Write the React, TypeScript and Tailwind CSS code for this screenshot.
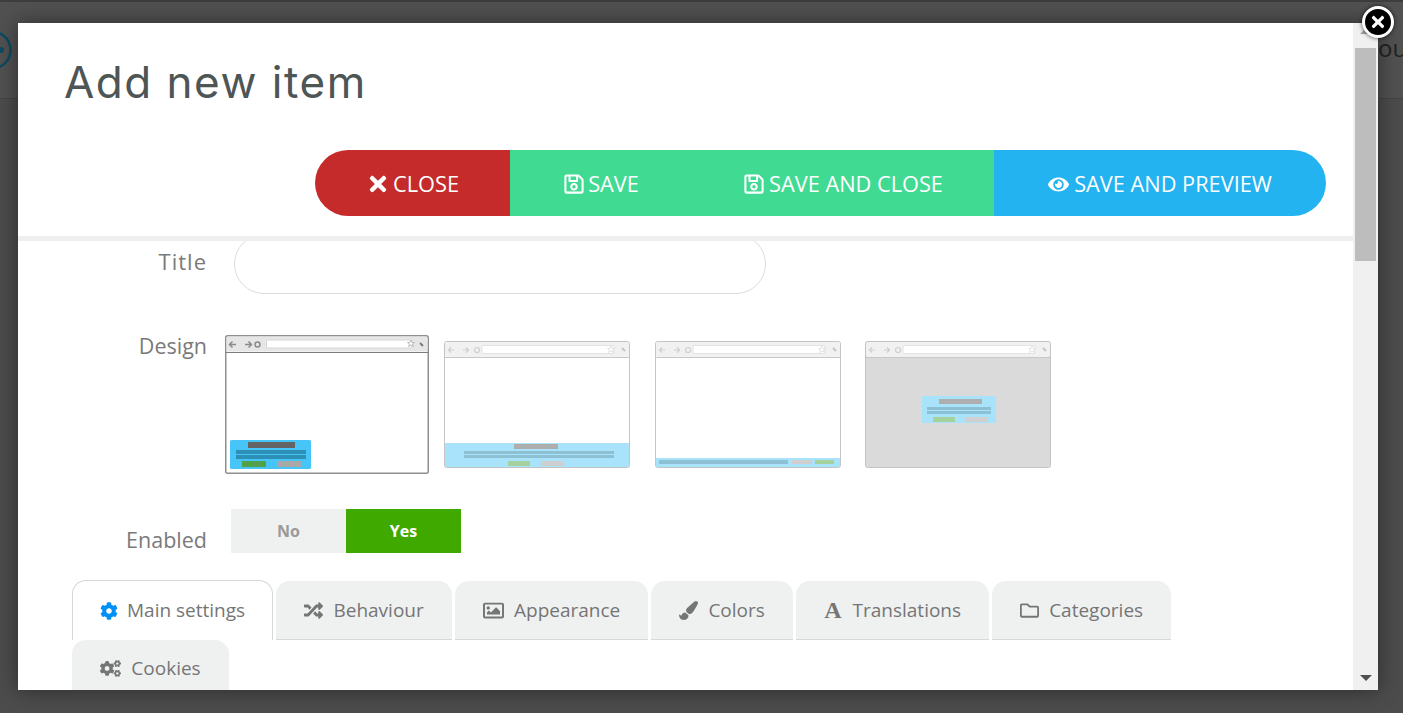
import { FaTimes, FaRegSave, FaEye, FaCog, FaRandom, FaRegImage, FaPaintBrush, FaRegFolder, FaCogs } from 'react-icons/fa'
import type { ReactNode } from 'react'

function BrowserThumb({ variant }: { variant: 'bar' | 'strip' | 'modal' }) {
  return (
    <svg width="186" height="127" viewBox="0 0 186 127" className="block">
      <rect x="0.5" y="0.5" width="185" height="126" rx="2" fill={variant === 'modal' ? '#dadada' : '#fff'} stroke="#c4c4c4" />
      <rect x="1" y="1" width="184" height="15" rx="2" fill="#f1f1f1" />
      <line x1="1" y1="16.5" x2="185" y2="16.5" stroke="#c8c8c8" />
      <path d="M10 9h-5m2-2.500-2.500 2.500 2.500 2.500M19 9h5m-2-2.500 2.500 2.500-2.500 2.500" fill="none" stroke="#cfcfcf" strokeWidth="1.200" />
      <circle cx="33" cy="9" r="2.500" fill="none" stroke="#cfcfcf" strokeWidth="1.200" />
      <rect x="38" y="4.500" width="132" height="8" rx="1" fill="#fff" stroke="#e2e2e2" />
      <path d="M167 5l1 2.500h2.500l-2 1.500 1 2.500-2.500-1.500-2.500 1.500 1-2.500-2-1.500h2.500z" fill="#fff" stroke="#d8d8d8" strokeWidth=".7" />
      <path d="M178 7l3 3" stroke="#c4c4c4" strokeWidth="1.800" />
      {variant === 'bar' && (
        <g>
          <rect x="1" y="102" width="184" height="24" fill="#a8e3fb" />
          <rect x="70" y="103" width="44" height="5" fill="#aeaeae" />
          <rect x="20" y="110" width="150" height="3" fill="#8ec0d4" />
          <rect x="20" y="114" width="150" height="3" fill="#8ec0d4" />
          <rect x="64" y="120" width="22" height="5" fill="#a5d29c" />
          <rect x="97" y="120" width="23" height="5" fill="#cfcfcf" />
        </g>
      )}
      {variant === 'strip' && (
        <g>
          <rect x="1" y="117" width="184" height="9" fill="#a8e3fb" />
          <rect x="4" y="119" width="129" height="4" fill="#8ec0d4" />
          <rect x="137" y="119" width="20" height="4" fill="#cfcfcf" />
          <rect x="160" y="119" width="19" height="4" fill="#a5d29c" />
        </g>
      )}
      {variant === 'modal' && (
        <g>
          <rect x="57" y="55" width="74" height="27" fill="#a8e3fb" />
          <rect x="74" y="58" width="43" height="5" fill="#aeaeae" />
          <rect x="62" y="66" width="64" height="3" fill="#8ec0d4" />
          <rect x="62" y="70" width="64" height="3" fill="#8ec0d4" />
          <rect x="68" y="76" width="22" height="5" fill="#a5d29c" />
          <rect x="100" y="76" width="23" height="5" fill="#cfcfcf" />
        </g>
      )}
    </svg>
  )
}

function SelectedThumb() {
  return (
    <svg width="204" height="139" viewBox="0 0 204 139" className="block">
      <rect x="0.750" y="0.750" width="202.500" height="137.500" rx="2" fill="#fff" stroke="#8f8f8f" strokeWidth="1.500" />
      <rect x="1.500" y="1.500" width="201" height="15" rx="2" fill="#e6e6e6" />
      <line x1="1" y1="17.500" x2="203" y2="17.500" stroke="#7c7c7c" />
      <path d="M11 9.500H5m2.500-3-3 3 3 3M20 9.500h6m-2.500-3 3 3-3 3" fill="none" stroke="#8a8a8a" strokeWidth="1.500" />
      <circle cx="32.500" cy="9.500" r="2.500" fill="none" stroke="#8a8a8a" strokeWidth="1.500" />
      <rect x="41.500" y="5" width="145" height="8" rx="1" fill="#fff" stroke="#d6d6d6" />
      <path d="M186 5l1 2.500h2.500l-2 1.500 1 2.500-2.500-1.500-2.500 1.500 1-2.500-2-1.500h2.500z" fill="#fff" stroke="#a6a6a6" strokeWidth=".7" />
      <path d="M195 8l3 3" stroke="#777" strokeWidth="1.800" />
      <rect x="5" y="105" width="81" height="29" rx="1.500" fill="#47c4f8" />
      <rect x="23" y="107" width="47" height="6" fill="#646464" />
      <rect x="11" y="115" width="70" height="4" fill="#2b8fb6" />
      <rect x="11" y="120" width="70" height="4" fill="#2b8fb6" />
      <rect x="17" y="126" width="24" height="6" fill="#50a24a" />
      <rect x="52" y="126" width="25" height="6" fill="#a8a8a8" />
    </svg>
  )
}

const tabs: { label: string; icon: ReactNode; className: string }[] = [
  {
    label: 'Main settings',
    icon: <FaCog className="text-[18px] text-[#0090f5]" />,
    className: 'h-[60px] gap-[9px] border border-b-0 border-[#d8d8d8] bg-white px-[27px]',
  },
  {
    label: 'Behaviour',
    icon: <FaRandom className="text-[19px]" />,
    className: 'mt-px h-[59px] w-[176px] justify-center gap-[10px] border-b border-[#d8d8d8] bg-[#eff1f1]',
  },
  {
    label: 'Appearance',
    icon: <FaRegImage className="text-[21px]" />,
    className: 'mt-px h-[59px] w-[193px] justify-center gap-[10px] border-b border-[#d8d8d8] bg-[#eff1f1]',
  },
  {
    label: 'Colors',
    icon: <FaPaintBrush className="text-[19px]" />,
    className: 'mt-px h-[59px] w-[142px] justify-center gap-[10px] border-b border-[#d8d8d8] bg-[#eff1f1]',
  },
  {
    label: 'Translations',
    icon: <span className="font-['Liberation_Serif',serif] text-[24px] leading-none font-bold">A</span>,
    className: 'mt-px h-[59px] w-[193px] justify-center gap-[11px] border-b border-[#d8d8d8] bg-[#eff1f1]',
  },
  {
    label: 'Categories',
    icon: <FaRegFolder className="text-[19px]" />,
    className: 'mt-px h-[59px] w-[179px] justify-center gap-[10px] border-b border-[#d8d8d8] bg-[#eff1f1]',
  },
  {
    label: 'Cookies',
    icon: <FaCogs className="text-[21px]" />,
    className: 'h-[56px] w-[157px] justify-center gap-[10px] bg-[#eff1f1]',
  },
]

export default function App() {
  return (
    <div className="relative h-[713px] w-full overflow-hidden bg-[#4c4c4c] font-['Open_Sans',sans-serif]">
      {/* page behind the dialog */}
      <div className="flex h-[99px] items-center justify-between overflow-hidden border-t-2 border-b border-[#3d3d3d] border-b-[#444] bg-[#515151]">
        <svg width="40" height="44" viewBox="0 0 40 44" className="-ml-[28px]">
          <circle cx="20" cy="22" r="18.500" fill="none" stroke="#0c4a63" strokeWidth="2.500" />
          <circle cx="29" cy="22" r="3" fill="#0c4a63" />
        </svg>
        <span className="mb-[4px] w-[25px] overflow-hidden text-[24px] font-normal text-[#222]">ou</span>
      </div>

      {/* dialog */}
      <div className="absolute top-[23px] right-[25px] bottom-[23px] left-[18px] flex bg-white shadow-[0_0_20px_rgba(0,0,0,0.45)]">
        <div className="flex min-w-0 flex-1 flex-col">
          <div className="h-[218px] shrink-0 border-b-[5px] border-[#eeeeee]">
            <h1 className="pt-[30px] pl-[46px] font-['Inter',sans-serif] text-[44px] leading-[58px] tracking-[1.5px] text-[#4e5555]">Add new item</h1>
            <div className="mt-[39px] ml-[297px] flex h-[66px] w-fit overflow-hidden rounded-full pt-0 text-[21.750px] text-white">
              <button className="flex w-[195px] items-center justify-center gap-[3px] bg-[#c62b2b] pt-[2px]">
                <FaTimes className="text-[24px]" /> CLOSE
              </button>
              <button className="flex w-[182px] items-center justify-center gap-[3px] bg-[#41da92] pt-[2px]">
                <FaRegSave className="text-[22px]" /> SAVE
              </button>
              <button className="flex w-[302px] items-center justify-center gap-[4px] bg-[#41da92] pt-[2px]">
                <FaRegSave className="text-[22px]" /> SAVE AND CLOSE
              </button>
              <button className="flex w-[332px] items-center justify-center gap-[5px] bg-[#22b3f0] pt-[2px]">
                <FaEye className="text-[21px]" /> SAVE AND PREVIEW
              </button>
            </div>
          </div>

          <div className="min-h-0 flex-1 overflow-hidden text-[#7a7a7a]">
            <div className="-mt-[7px]">
              <div className="flex items-center">
                <label className="-mt-[6px] w-[189px] text-right text-[22px] leading-[30px] tracking-[1px]">Title</label>
                <input className="ml-[27px] h-[60px] w-[532px] rounded-[30px] border border-[#dcdcdc] bg-white" />
              </div>

              <div className="mt-[41px] flex items-start">
                <label className="-mt-[4px] w-[189px] text-right text-[21.500px] leading-[30px]">Design</label>
                <div className="ml-[18px] flex">
                  <SelectedThumb />
                  <div className="mt-[6px] ml-[15px]"><BrowserThumb variant="bar" /></div>
                  <div className="mt-[6px] ml-[25px]"><BrowserThumb variant="strip" /></div>
                  <div className="mt-[6px] ml-[24px]"><BrowserThumb variant="modal" /></div>
                </div>
              </div>

              <div className="mt-[35px] flex items-start">
                <label className="mt-[16px] w-[189px] text-right text-[21.500px] leading-[30px]">Enabled</label>
                <div className="ml-[24px] flex h-[44px] text-[16px] font-bold">
                  <span className="flex w-[115px] items-center justify-center bg-[#eff1f1] text-[#999]">No</span>
                  <span className="flex w-[115px] items-center justify-center bg-[#3fa900] text-white">Yes</span>
                </div>
              </div>

              <div className="mt-[25px] mr-[50px] ml-[54px] flex flex-wrap gap-x-[3px] text-[19px] text-[#757575]">
                {tabs.map((tab) => (
                  <div key={tab.label} className={`flex items-center rounded-t-[14px] ${tab.className}`}>
                    {tab.icon}
                    <span>{tab.label}</span>
                  </div>
                ))}
              </div>
            </div>
          </div>
        </div>

        {/* scrollbar */}
        <div className="flex w-[25px] shrink-0 flex-col items-center bg-[#f0f0f0]">
          <div className="mt-[5px] h-0 w-0 border-x-[6px] border-b-[6px] border-x-transparent border-b-[#a3a3a3]" />
          <div className="mt-[14px] h-[213px] w-[21px] bg-[#bdbdbd]" />
          <div className="mt-auto mb-[9px] h-0 w-0 border-x-[6px] border-t-[6px] border-x-transparent border-t-[#505050]" />
        </div>

        {/* close badge */}
        <div className="absolute -top-[17px] -right-[16px] flex h-[32px] w-[32px] items-center justify-center rounded-full border-[3px] border-white bg-black text-white shadow-[0_0_4px_rgba(0,0,0,0.7)]">
          <FaTimes className="text-[18px]" />
        </div>
      </div>
    </div>
  )
}
